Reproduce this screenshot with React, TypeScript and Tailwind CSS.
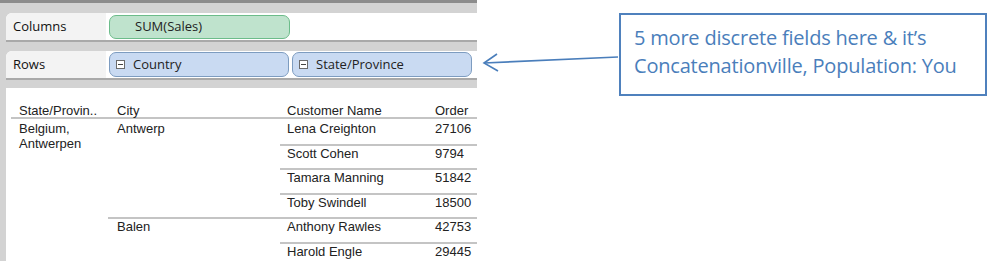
const shelfFont = { fontFamily: '"Open Sans", "Noto Sans", sans-serif' };

const Pill = ({ label, tone, minus }: { label: string; tone: "green" | "blue"; minus?: boolean }) => (
  <div
    className={
      tone === "green"
        ? "flex items-center h-[24px] w-[181px] rounded-[7px] border border-[#6cbc8a] bg-[#bfe3cd] pl-[25px] text-[13px] text-[#222]"
        : "flex items-center h-[25px] w-[180px] rounded-[7px] border border-[#7d9cc0] bg-[#c9daf2] pl-[6px] text-[13px] text-[#222]"
    }
  >
    {minus && (
      <span className="mr-[8px] flex h-[9px] w-[9px] items-center justify-center border border-[#6b6b6b] bg-white">
        <span className="h-px w-[5px] bg-[#444]" />
      </span>
    )}
    {label}
  </div>
);

const Shelf = ({ label, children }: { label: string; children: React.ReactNode }) => (
  <div
    className="ml-[6px] flex h-[29px] shrink-0 rounded-tl-[6px] border-b-2 border-[#a9a9a9] bg-white"
    style={shelfFont}
  >
    <div className="flex w-[100px] items-center rounded-tl-[6px] bg-[#f3f3f3] pl-[7px] text-[13px] text-[#111]">{label}</div>
    <div className="flex items-center gap-[3px] pl-[3px]">{children}</div>
  </div>
);

const rows = [
  { state: "Belgium,\nAntwerpen", city: "Antwerp", name: "Lena Creighton", order: "27106", cityLine: false },
  { state: "", city: "", name: "Scott Cohen", order: "9794", cityLine: false },
  { state: "", city: "", name: "Tamara Manning", order: "51842", cityLine: false },
  { state: "", city: "", name: "Toby Swindell", order: "18500", cityLine: false },
  { state: "", city: "Balen", name: "Anthony Rawles", order: "42753", cityLine: true },
  { state: "", city: "", name: "Harold Engle", order: "29445", cityLine: false },
];

export default function App() {
  return (
    <div className="flex h-[261px] w-[989px] overflow-hidden bg-white">
      <div className="flex h-full w-[477px] flex-col overflow-hidden border-t-[3px] border-[#8c8c8c] bg-[#d3d3d3]">
        <div className="h-[10px] shrink-0" />
        <Shelf label="Columns">
          <Pill label="SUM(Sales)" tone="green" />
        </Shelf>
        <div className="h-[9px] shrink-0" />
        <Shelf label="Rows">
          <Pill label="Country" tone="blue" minus />
          <Pill label="State/Province" tone="blue" minus />
        </Shelf>
        <div className="h-[8px] shrink-0" />
        <div
          className="ml-[6px] shrink-0 bg-white pt-[15px] pb-[20px] text-[13px] leading-[15px] text-[#222]"
          style={{ fontFamily: '"Liberation Sans", Arial, sans-serif' }}
        >
          <div className="ml-[5px] flex h-[16px] border-b-2 border-[#c4c4c4]">
            <div className="w-[106px] pl-[8px]">State/Provin..</div>
            <div className="w-[170px]">City</div>
            <div className="w-[148px]">Customer Name</div>
            <div>Order</div>
          </div>
          {rows.map((r, i) => (
            <div key={i} className="ml-[5px] flex h-[24.6px]">
              <div className="w-[97px] whitespace-pre-line pl-[8px] pt-[2px]">{r.state}</div>
              <div className={"w-[179px] pl-[9px] " + (r.cityLine ? "border-t-2 border-[#c4c4c4]" : "pt-[2px]")}>
                {r.city}
              </div>
              <div
                className={
                  "-ml-[7px] flex flex-1 pl-[7px] " + (i > 0 ? "border-t-2 border-[#c4c4c4]" : "pt-[2px]")
                }
              >
                <div className="w-[148px]">{r.name}</div>
                <div>{r.order}</div>
              </div>
            </div>
          ))}
        </div>
      </div>

      <div className="relative flex-1">
        <svg className="absolute left-0 top-0" width="150" height="100">
          <line x1="141" y1="57" x2="7" y2="63" stroke="#4a7ebb" strokeWidth="1.6" />
          <polyline points="20,54 7,63 21,71" fill="none" stroke="#4a7ebb" strokeWidth="1.6" />
        </svg>
        <div
          className="ml-[142px] mt-[13px] h-[83px] w-[368px] border-2 border-[#4f81bd] pl-[13px] pt-[9px] text-[20px] leading-[28px] tracking-[-0.2px] text-[#4a7ebb]"
          style={{ fontFamily: '"Open Sans", "Noto Sans", sans-serif' }}
        >
          <div>5 more discrete fields here &amp; it’s</div>
          <div>Concatenationville, Population: You</div>
        </div>
      </div>
    </div>
  );
}
